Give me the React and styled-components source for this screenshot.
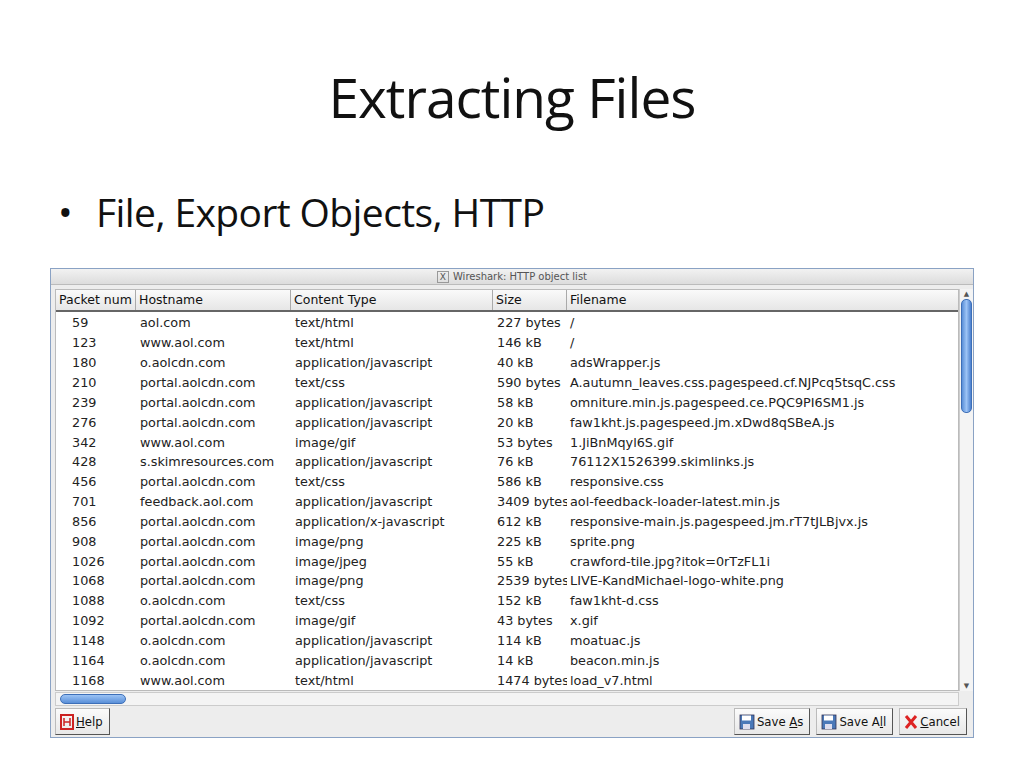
import React from "react";
import styled, { createGlobalStyle } from "styled-components";

const G = createGlobalStyle`
  body { margin:0; background:#fff; font-family: Lato, "Open Sans", sans-serif; }
`;
const Page = styled.div`width:1024px;height:768px;display:flex;flex-direction:column;align-items:center;overflow:hidden;`;
const Title = styled.h1`margin:62px 0 0;height:70px;font-weight:400;font-size:55px;line-height:70px;color:#111;font-family:"Open Sans",Lato,sans-serif;letter-spacing:-1px;`;
const Bullet = styled.div`align-self:flex-start;margin:55px 0 0 58px;font-size:39px;line-height:50px;color:#111;font-family:"Open Sans",Lato,sans-serif;letter-spacing:-0.6px;
  &::before{content:"•";margin-right:24px;}`;
const Win = styled.div`align-self:flex-start;margin:31px 0 0 50px;width:922px;height:468px;border:1px solid #8aa2c4;background:#ededed;display:flex;flex-direction:column;font-family:"DejaVu Sans",sans-serif;`;
const TitleBar = styled.div`height:16px;background:linear-gradient(#f2f2f2,#dcdcdc);border-bottom:1px solid #bbb;font-size:10px;color:#555;display:flex;align-items:center;justify-content:center;gap:4px;`;
const XIcon = styled.span`display:inline-block;width:10px;height:10px;border:1px solid #999;font-size:9px;line-height:10px;text-align:center;color:#555;`;
const Body = styled.div`flex:1;display:flex;margin:4px 0 0 4px;`;
const TableArea = styled.div`flex:1;display:flex;flex-direction:column;background:#fff;border:1px solid #bbb;`;
const Grid = styled.div`display:grid;grid-template-columns:80px 155px 202px 74px 1fr;`;
const Head = styled(Grid)`height:20px;background:linear-gradient(#fafafa,#e6e6e6);border-bottom:2px solid #666;`;
const HCell = styled.div`font-size:12.5px;line-height:20px;padding-left:3px;border-right:1px solid #aaa;color:#111;white-space:nowrap;&:last-child{border-right:none;}`;
const Rows = styled.div`padding-top:1px;flex:1;`;
const Row = styled(Grid)`height:19.85px;`;
const Cell = styled.div`font-size:12.8px;line-height:19.85px;padding-left:${p=>p.$pad||4}px;color:#222;white-space:nowrap;overflow:hidden;`;
const VScroll = styled.div`width:13px;display:flex;flex-direction:column;align-items:center;background:#f4f4f4;border-left:1px solid #ccc;`;
const Arrow = styled.div`font-size:7px;color:#555;height:10px;line-height:10px;`;
const VThumb = styled.div`width:9px;height:112px;border-radius:5px;background:linear-gradient(90deg,#5a8fd8,#9cc3f5,#4a7fce);border:1px solid #3d6fb8;`;
const HScroll = styled.div`height:12px;margin:1px 14px 0 4px;display:flex;align-items:center;background:#f4f4f4;border:1px solid #ccc;`;
const HThumb = styled.div`width:64px;height:8px;border-radius:5px;background:linear-gradient(#9cc3f5,#5a8fd8);border:1px solid #3d6fb8;margin-left:4px;`;
const Buttons = styled.div`height:32px;display:flex;align-items:center;gap:6px;padding:0 6px 0 4px;font-family:"DejaVu Sans Condensed","DejaVu Sans",sans-serif;`;
const Btn = styled.div`height:25px;display:flex;align-items:center;gap:2px;padding:0 6px 0 4px;font-size:13px;color:#111;border:1px solid #bbb;border-right-color:#555;border-bottom-color:#555;background:linear-gradient(#fbfbfb,#e8e8e8);
  u{text-decoration:underline;}`;
const Spacer = styled.div`flex:1;`;

const data = [
["59","aol.com","text/html","227 bytes","/"],
["123","www.aol.com","text/html","146 kB","/"],
["180","o.aolcdn.com","application/javascript","40 kB","adsWrapper.js"],
["210","portal.aolcdn.com","text/css","590 bytes","A.autumn_leaves.css.pagespeed.cf.NJPcq5tsqC.css"],
["239","portal.aolcdn.com","application/javascript","58 kB","omniture.min.js.pagespeed.ce.PQC9PI6SM1.js"],
["276","portal.aolcdn.com","application/javascript","20 kB","faw1kht.js.pagespeed.jm.xDwd8qSBeA.js"],
["342","www.aol.com","image/gif","53 bytes","1.JiBnMqyl6S.gif"],
["428","s.skimresources.com","application/javascript","76 kB","76112X1526399.skimlinks.js"],
["456","portal.aolcdn.com","text/css","586 kB","responsive.css"],
["701","feedback.aol.com","application/javascript","3409 bytes","aol-feedback-loader-latest.min.js"],
["856","portal.aolcdn.com","application/x-javascript","612 kB","responsive-main.js.pagespeed.jm.rT7tJLBjvx.js"],
["908","portal.aolcdn.com","image/png","225 kB","sprite.png"],
["1026","portal.aolcdn.com","image/jpeg","55 kB","crawford-tile.jpg?itok=0rTzFL1i"],
["1068","portal.aolcdn.com","image/png","2539 bytes","LIVE-KandMichael-logo-white.png"],
["1088","o.aolcdn.com","text/css","152 kB","faw1kht-d.css"],
["1092","portal.aolcdn.com","image/gif","43 bytes","x.gif"],
["1148","o.aolcdn.com","application/javascript","114 kB","moatuac.js"],
["1164","o.aolcdn.com","application/javascript","14 kB","beacon.min.js"],
["1168","www.aol.com","text/html","1474 bytes","load_v7.html"],
];

const Disk = ({c}) => (
  <svg width="16" height="16" viewBox="0 0 16 16"><rect x="1" y="1" width="14" height="14" fill={c} stroke="#335" strokeWidth="0.8"/><rect x="3" y="1.5" width="9" height="5" fill="#fff"/><rect x="4" y="10" width="7" height="5" fill="#dde"/></svg>
);

export default function App(){
  return <Page><G/>
    <Title>Extracting Files</Title>
    <Bullet>File, Export Objects, HTTP</Bullet>
    <Win>
      <TitleBar><XIcon>X</XIcon>Wireshark: HTTP object list</TitleBar>
      <Body>
        <TableArea>
          <Head>{["Packet num","Hostname","Content Type","Size","Filename"].map(h=><HCell key={h}>{h}</HCell>)}</Head>
          <Rows>{data.map(r=><Row key={r[0]}>
            <Cell $pad={16}>{r[0]}</Cell><Cell>{r[1]}</Cell><Cell>{r[2]}</Cell><Cell>{r[3]}</Cell><Cell $pad={3}>{r[4]}</Cell>
          </Row>)}</Rows>
        </TableArea>
        <VScroll><Arrow>▲</Arrow><VThumb/><Spacer/><Arrow>▼</Arrow></VScroll>
      </Body>
      <HScroll><HThumb/></HScroll>
      <Buttons>
        <Btn><svg width="14" height="16" viewBox="0 0 14 16"><rect x="1" y="1" width="12" height="14" fill="none" stroke="#c22" strokeWidth="2"/><path d="M4 4v8M10 4v8M4 8h6" stroke="#c22" strokeWidth="1.5"/></svg><span><u>H</u>elp</span></Btn>
        <Spacer/>
        <Btn><Disk c="#4a78b8"/><span>Save <u>A</u>s</span></Btn>
        <Btn><Disk c="#4a78b8"/><span>Save A<u>l</u>l</span></Btn>
        <Btn><svg width="14" height="16" viewBox="0 0 14 16"><path d="M2 2L12 14M12 2L2 14" stroke="#d22" strokeWidth="3"/></svg><span><u>C</u>ancel</span></Btn>
      </Buttons>
    </Win>
  </Page>;
}
